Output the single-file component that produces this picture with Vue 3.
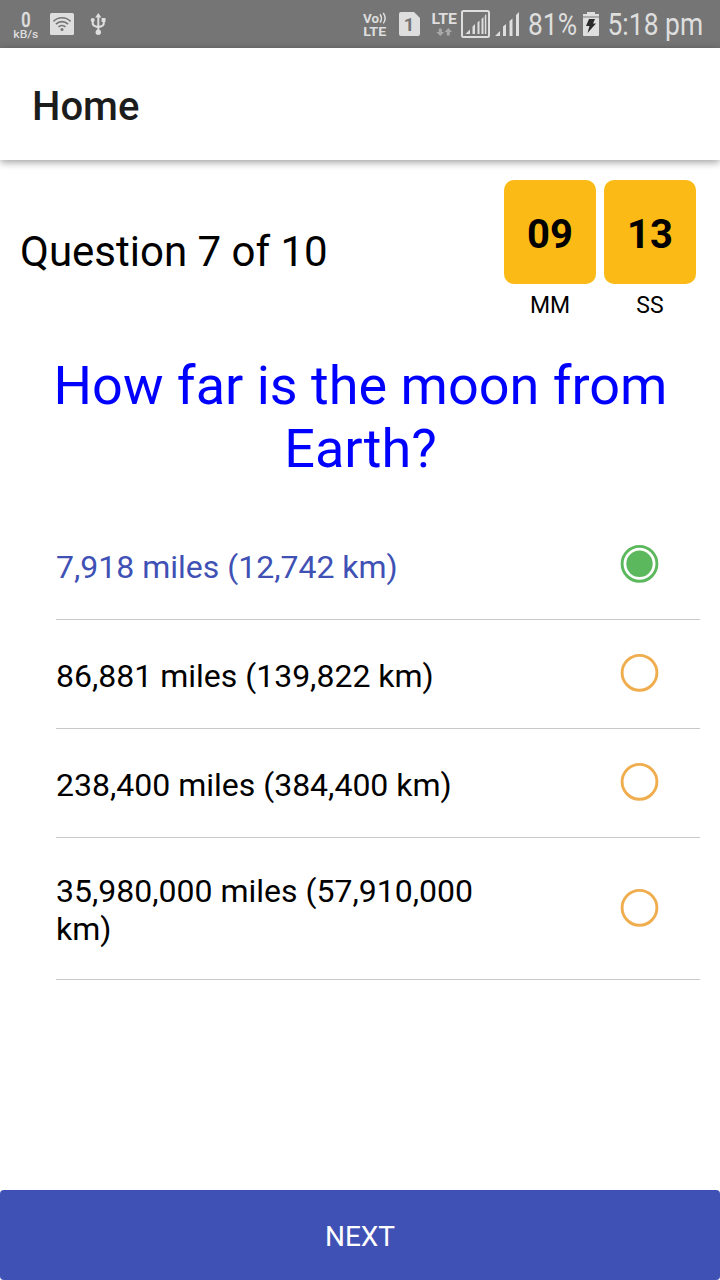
<script setup>
import { ref } from 'vue'

const timer = [
  { value: '09', unit: 'MM' },
  { value: '13', unit: 'SS' },
]
const options = [
  { label: '7,918 miles (12,742 km)' },
  { label: '86,881 miles (139,822 km)' },
  { label: '238,400 miles (384,400 km)' },
  { label: '35,980,000 miles (57,910,000 km)', tall: true },
]
const selected = ref(0)
</script>

<template>
  <div class="screen">
    <header class="status">
      <svg width="130" height="48" viewBox="0 0 130 48" fill="#dedede">
        <text transform="translate(21.2 26.5) scale(.82 1)" font-size="20" font-weight="500" stroke="#dedede" stroke-width=".4">0</text>
        <text transform="translate(13.3 37.8) scale(.98 1)" font-size="11.8" font-weight="500" textLength="25.5" lengthAdjust="spacingAndGlyphs">kB/s</text>
        <rect x="50" y="13" width="24" height="22" rx="1.5" />
        <g fill="none" stroke="#757575" stroke-width="1.7">
          <path d="M53.500 21.300a12 12 0 0 1 17 0M56 24.200a8.500 8.500 0 0 1 12 0M58.500 27a5 5 0 0 1 7 0" />
        </g>
        <circle cx="62" cy="29.5" r="1.5" fill="#757575" />
        <g fill="none" stroke="#dedede" stroke-width="2">
          <path d="M98.300 16v17M92.700 19v4q0 2.500 2.500 3.200l3.100 1M103.800 20v3q0 2.500-2.500 3.200l-3 1" />
        </g>
        <path d="M95.200 17.500l3.100-4.500 3.100 4.500zM101.600 18h3.900v4h-3.900z" />
        <circle cx="92.7" cy="20" r="2" />
        <circle cx="98.3" cy="32.3" r="2.7" />
      </svg>
      <svg width="370" height="48" viewBox="350 0 370 48" fill="#dedede">
        <text x="363" y="23" font-size="13" font-weight="700" textLength="16" lengthAdjust="spacingAndGlyphs">Vo</text>
        <path d="M380 14.200q3 4.300 0 8.300M383.200 13q4 5.300 0 10.400" fill="none" stroke="#dedede" stroke-width="1.5" />
        <text x="363.2" y="36" font-size="13" font-weight="700" textLength="23" lengthAdjust="spacingAndGlyphs">LTE</text>
        <path d="M401 12h13l6 6v16a2 2 0 0 1-2 2h-17a2 2 0 0 1-2-2V14a2 2 0 0 1 2-2z" />
        <text x="403.7" y="30.7" font-size="18.5" font-weight="700" fill="#757575">1</text>
        <text x="431.5" y="24" font-size="15" font-weight="700" textLength="25.5" lengthAdjust="spacingAndGlyphs">LTE</text>
        <path d="M438.800 28.500h3v3.500h2.500l-4 4-4-4h2.500zM446.800 35.500h3V32h2.200l-3.700-4-3.700 4h2.200z" fill="#a9a9a9" />
        <rect x="462" y="11" width="27" height="26" rx="1.5" fill="none" stroke="#dedede" stroke-width="2" />
        <path d="M465.500 34l4.500-4.500V34zM472.500 34v-7.500l2.500-2.500V34zM477.500 34V22.500l2-2V34zM481.500 34V19l2-2v17zM484.800 34V15.500l1.500-1.500V34z" />
        <path d="M495 36l5-5v5zM503 36v-9.500l3-2.500v12zM509.500 36V21l3-2.500V36zM516 36V15l3-3v24z" />
        <text transform="translate(528 35) scale(.84 1)" font-size="31.5">81%</text>
        <path d="M583 14h4v-2h8v2h4v2.500h-16zM583 18h16v17a1 1 0 0 1-1 1h-14a1 1 0 0 1-1-1z" />
        <path d="M583 16h16v2h-16z" fill="#aaa" />
        <path d="M589 19h6l-2 4.500h3l-8.500 9.500 2-7h-3.500z" fill="#2a2a2a" />
        <text transform="translate(607.5 35) scale(.84 1)" font-size="31.5">5:18 pm</text>
      </svg>
    </header>
    <nav class="toolbar">Home</nav>
    <main>
      <section class="progress">
        <h2>Question 7 of 10</h2>
        <div class="timer">
          <div v-for="t in timer" :key="t.unit" class="cell">
            <div class="value">{{ t.value }}</div>
            <div class="unit">{{ t.unit }}</div>
          </div>
        </div>
      </section>
      <h1>How far is the moon from Earth?</h1>
      <ul class="options">
        <li
          v-for="(o, i) in options"
          :key="o.label"
          :class="{ tall: o.tall, selected: i === selected }"
          @click="selected = i"
        >
          <span class="label">{{ o.label }}</span>
          <svg class="radio" width="40" height="40" viewBox="0 0 40 40">
            <circle cx="19.5" cy="19.8" r="17.4" fill="none" stroke="currentColor" stroke-width="2.9" />
            <circle v-if="i === selected" cx="19.5" cy="19.8" r="13.2" fill="currentColor" />
          </svg>
        </li>
      </ul>
    </main>
    <button class="next">NEXT</button>
  </div>
</template>

<style>
body {
  background: #fff;
}
</style>

<style scoped>
.screen {
  display: flex;
  flex-direction: column;
  width: 720px;
  height: 1280px;
  overflow: hidden;
  background: #fff;
  color: #000;
  font-family: Roboto, sans-serif;
}
.status {
  display: flex;
  justify-content: space-between;
  height: 48px;
  background: #757575;
}
.toolbar {
  box-sizing: border-box;
  height: 112px;
  padding: 35px 32px 0;
  font-size: 40px;
  line-height: 48px;
  font-weight: 500;
  color: #1c1c1c;
  background: #fff;
  box-shadow: 0 2px 8px rgba(0, 0, 0, 0.4);
}
main {
  flex: 1;
}
.progress {
  display: flex;
  justify-content: space-between;
  padding: 20px 24px 0 20px;
  height: 174px;
}
h2 {
  margin: 47px 0 0;
  font-size: 42px;
  line-height: 50px;
  font-weight: 400;
}
.timer {
  display: flex;
  gap: 8px;
}
.cell {
  width: 92px;
  text-align: center;
}
.value {
  height: 104px;
  line-height: 110px;
  border-radius: 10px;
  background: #fbba16;
  font-size: 40px;
  font-weight: 700;
}
.unit {
  margin-top: 8px;
  font-size: 23px;
  line-height: 28px;
}
h1 {
  margin: 0 19px 0 20px;
  font-size: 54px;
  line-height: 63px;
  font-weight: 400;
  color: #00f;
  text-align: center;
}
.options {
  list-style: none;
  margin: 31px 20px 0 56px;
  padding: 0;
}
li {
  display: flex;
  justify-content: space-between;
  box-sizing: border-box;
  height: 109px;
  padding: 37px 40px 0 0;
  border-bottom: 1px solid #c8c8c8;
  font-size: 32px;
  line-height: 38px;
}
.label {
  width: 450px;
}
.radio {
  margin-top: -4px;
  color: #f0ad4e;
}
.selected .label {
  color: #3f51b5;
}
.selected .radio {
  color: #5cb85c;
}
.tall {
  height: 142px;
  padding-top: 34px;
}
.tall .radio {
  margin-top: 16px;
}
.next {
  height: 90px;
  padding: 2px 0 0;
  border: 0;
  border-radius: 4px;
  background: #3f51b5;
  color: #fff;
  font-family: inherit;
  font-size: 28px;
}
</style>
